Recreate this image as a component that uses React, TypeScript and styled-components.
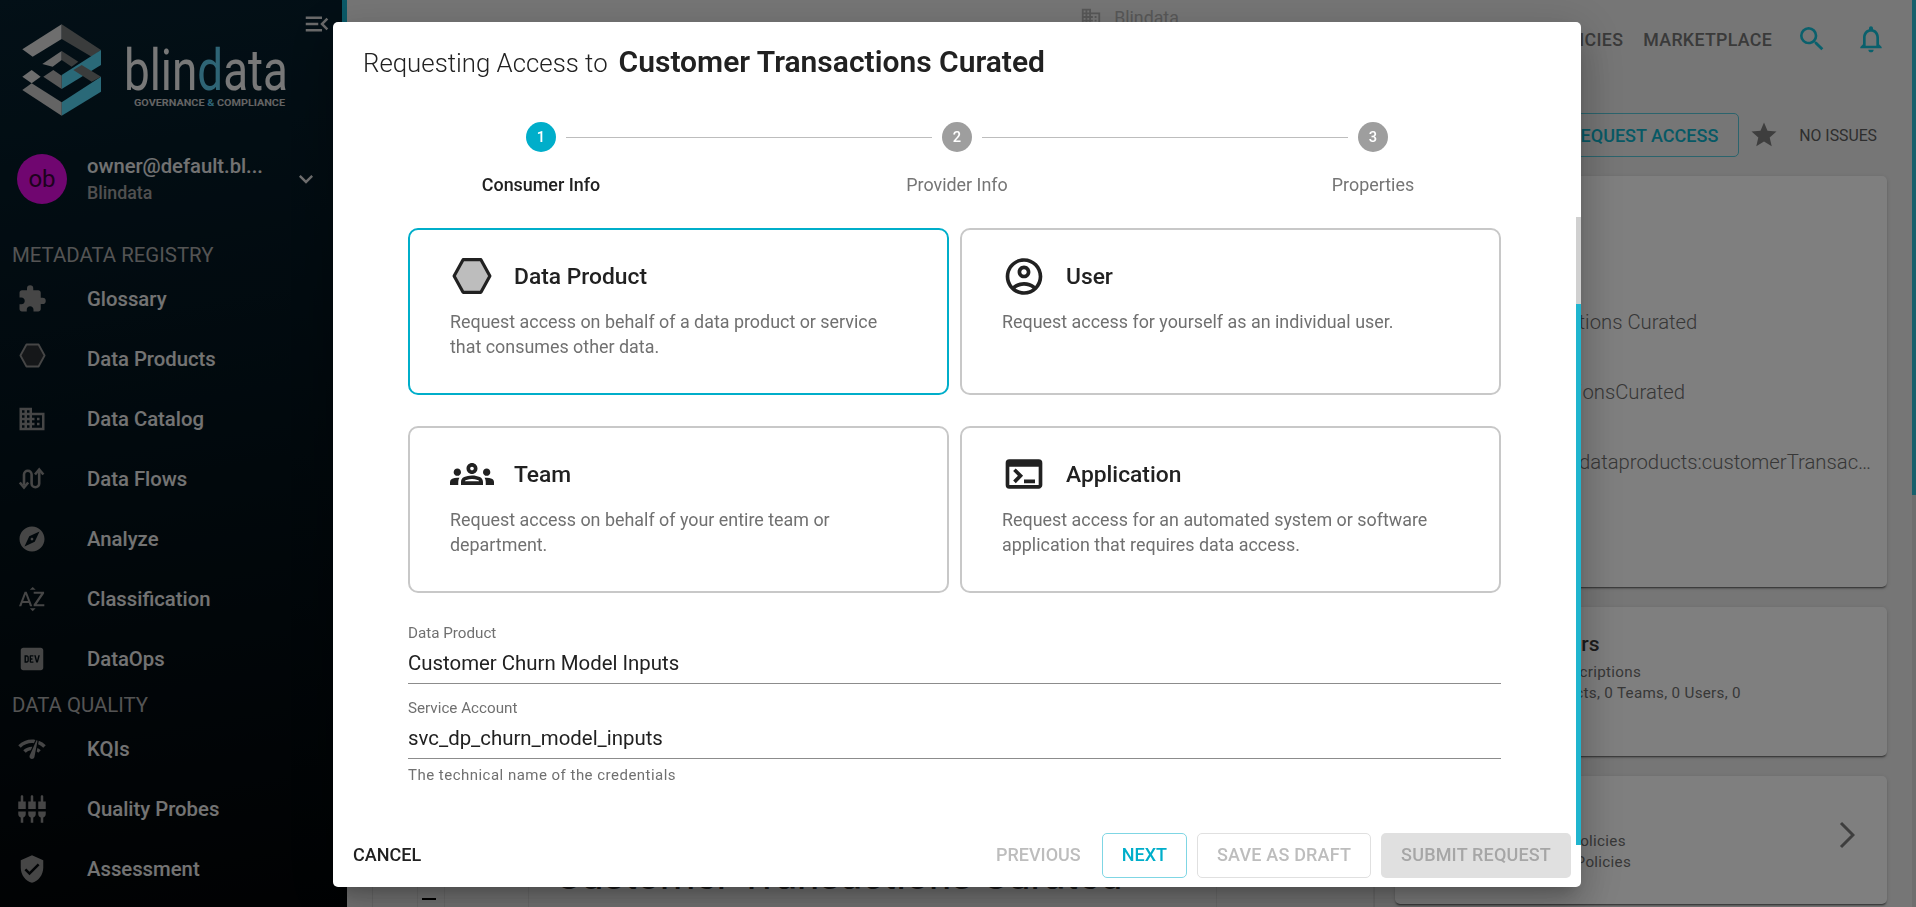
import styled, { createGlobalStyle } from "styled-components";
import { ReactNode } from "react";
import {
  MdBusiness,
  MdExplore,
  MdExtension,
  MdKeyboardArrowDown,
  MdLogoDev,
  MdMenuOpen,
  MdNetworkCheck,
  MdNotificationsNone,
  MdOutlineAccountCircle,
  MdOutlineGroups,
  MdOutlineTerminal,
  MdSearch,
  MdSettingsInputComponent,
  MdSortByAlpha,
  MdStar,
  MdVerifiedUser,
} from "react-icons/md";

const GlobalStyle = createGlobalStyle`
  html, body {
    margin: 0;
    height: 907px;
    overflow: hidden;
    font-family: Roboto, "Liberation Sans", sans-serif;
  }
  * { box-sizing: border-box; }
`;

const Shell = styled.div`
  display: flex;
  width: 1916px;
  height: 907px;
  overflow: hidden;
`;

/* sidebar */
const Sidebar = styled.aside`
  position: relative;
  flex: 0 0 347px;
  display: flex;
  flex-direction: column;
  background: linear-gradient(170deg, #06202e 0%, #03131c 45%, #020406 100%);
  color: #f2f2f2;
`;
const SideThumb = styled.div`
  position: absolute;
  top: 0;
  right: 0;
  width: 5px;
  height: 500px;
  background: #16b4d0;
`;
const Toggle = styled.div`
  position: absolute;
  top: 9px;
  right: 15px;
  display: flex;
  color: #d4d4d4;
`;
const LogoBox = styled.div`
  height: 149px;
`;
const LogoSvg = styled.svg`
  display: block;
`;
const Profile = styled.div`
  height: 60px;
  display: flex;
  align-items: center;
  padding-left: 17px;
`;
const Avatar = styled.div`
  width: 50px;
  height: 50px;
  border-radius: 50%;
  background: #e00ce0;
  color: #3c053c;
  font-size: 24px;
  display: flex;
  align-items: center;
  justify-content: center;
  margin-right: 20px;
`;
const ProfileText = styled.div`
  width: 176px;
`;
const ProfileName = styled.div`
  font-size: 20.2px;
  font-weight: 500;
  line-height: 28px;
  color: #e4e4e4;
  white-space: nowrap;
`;
const ProfileOrg = styled.div`
  font-size: 17.8px;
  font-weight: 500;
  line-height: 26px;
  color: #a0a0a0;
`;
const ProfileArrow = styled.div`
  margin-left: 29px;
  display: flex;
  color: #e0e0e0;
`;
const SectionTitle = styled.div`
  height: 30px;
  line-height: 32px;
  padding-left: 12px;
  font-size: 20.4px;
  color: #a8a8a8;
  margin-top: ${(p: { $first?: boolean }) => (p.$first ? "30px" : "0")};
`;
const NavItem = styled.div`
  height: 60px;
  display: flex;
  align-items: center;
  padding-left: 17px;
`;
const NavIcon = styled.div<{ $lift?: number }>`
  width: 30px;
  height: 30px;
  display: flex;
  align-items: center;
  justify-content: center;
  color: #8c8c8c;
  margin-right: 40px;
  padding-bottom: ${(p) => p.$lift ?? 0}px;
`;
const NavText = styled.div`
  font-size: 20.3px;
  font-weight: 500;
  color: #e6e6e6;
`;

/* page behind the dialog */
const Main = styled.main`
  flex: 1;
  display: flex;
  min-width: 0;
`;
const Page = styled.div`
  flex: 1;
  min-width: 0;
  background: #ececec;
  display: flex;
  flex-direction: column;
  padding: 0 25px;
  color: #747474;
`;
const Rail = styled.div`
  flex: 0 0 4px;
  display: flex;
  flex-direction: column;
  background: #dcdcdc;
`;
const RailThumb = styled.div`
  height: 495px;
  background: #2fc0d8;
`;
const TopBar = styled.div`
  height: 113px;
  display: grid;
  grid-template-columns: 1fr auto 1fr;
`;
const Crumb = styled.div`
  grid-column: 2;
  display: flex;
  align-items: center;
  gap: 12px;
  height: 34px;
  font-size: 17.8px;
  color: #b0b0b0;
`;
const TopNav = styled.nav`
  grid-column: 3;
  justify-self: end;
  display: flex;
  align-items: center;
  height: 78px;
  gap: 20px;
  font-size: 17.8px;
  font-weight: 500;
  letter-spacing: 0.3px;
`;
const TopIcon = styled.div`
  display: flex;
  color: #14c0d8;
  margin-left: ${(p: { $gap: number }) => p.$gap}px;
`;
const ActionRow = styled.div`
  display: flex;
  align-items: center;
  justify-content: flex-end;
  height: 44px;
  margin-right: 10px;
`;
const RequestButton = styled.div`
  height: 44px;
  padding: 0 20px;
  display: flex;
  align-items: center;
  border: 1px solid #56c8da;
  border-radius: 5px;
  font-size: 18px;
  font-weight: 500;
  color: #0fb2ca;
`;
const StarIcon = styled.div`
  display: flex;
  margin: 0 20px 0 10px;
  color: #7c7c7c;
`;
const IssueText = styled.div`
  font-size: 15.8px;
  color: #5c5c5c;
`;
const Columns = styled.div`
  display: flex;
  gap: 20px;
  margin-top: 19px;
  flex: 1;
  min-height: 0;
`;
const LeftPane = styled.div`
  flex: 1;
  min-width: 0;
`;
const LowerPanel = styled.div`
  margin-top: 640px;
  height: 120px;
  display: flex;
  border-left: 1px solid #d8d8d8;
  border-right: 1px solid #d8d8d8;
`;
const LowerCell = styled.div<{ $width?: number }>`
  flex: ${(p) => (p.$width ? `0 0 ${p.$width}px` : "1")};
  min-width: 0;
  border-right: 1px solid #dcdcdc;
`;
const Minus = styled.div`
  width: 14px;
  height: 2px;
  background: #000;
  margin: 82px 0 0 4px;
`;
const BigTitle = styled.div`
  padding: 35px 0 0 26px;
  font-size: 40.3px;
  line-height: 50px;
  color: #333;
  white-space: nowrap;
`;
const RightPane = styled.div`
  flex: 0 0 492px;
  min-width: 0;
  display: flex;
  flex-direction: column;
  gap: 20px;
`;
const InfoCard = styled.div<{ $height: number }>`
  height: ${(p) => p.$height}px;
  flex-shrink: 0;
  background: #fff;
  border-radius: 5px;
  box-shadow: 0 2px 2px -1px rgba(0, 0, 0, 0.6), 0 1px 4px rgba(0, 0, 0, 0.12);
`;
const DetailList = styled.div`
  padding: 111px 12px 0 20px;
`;
const DetailRow = styled.div`
  height: 70px;
  line-height: 70px;
  font-size: 20.3px;
  font-weight: 300;
  color: #6e6e6e;
  white-space: nowrap;
  overflow: hidden;
  text-overflow: ellipsis;
`;
const SummaryBody = styled.div`
  padding: 25px 0 0 89px;
  flex: 1;
  align-self: flex-start;
`;
const SummaryRow = styled.div`
  display: flex;
  align-items: center;
  height: 100%;
`;
const SummaryTitle = styled.div`
  font-size: 21px;
  font-weight: 500;
  line-height: 24px;
  color: #3a3a3a;
  margin: 0 0 6px 8px;
`;
const SummaryLine = styled.div`
  font-size: 15.2px;
  line-height: 20.5px;
  letter-spacing: 0.3px;
  color: #707070;
  max-width: 272px;
`;
const SummaryArrow = styled.svg`
  display: block;
  color: #7c7c7c;
  margin: -10px 32px 0 0;
`;

/* dialog */
const Backdrop = styled.div`
  position: fixed;
  inset: 0;
  background: rgba(0, 0, 0, 0.5);
  display: grid;
  place-items: center;
  padding: 2px 2px 0 0;
`;
const Dialog = styled.div`
  position: relative;
  width: 1248px;
  height: 865px;
  background: #fff;
  border-radius: 5px;
  display: flex;
  flex-direction: column;
  color: #212121;
  box-shadow: 0 11px 15px -7px rgba(0, 0, 0, 0.2), 0 24px 38px 3px rgba(0, 0, 0, 0.14), 0 9px 46px 8px rgba(0, 0, 0, 0.12);
`;
const ScrollRail = styled.div`
  position: absolute;
  top: 195px;
  right: 0;
  width: 5px;
  height: 628px;
  display: flex;
  flex-direction: column;
`;
const ScrollPart = styled.div<{ $active?: boolean }>`
  flex: ${(p) => (p.$active ? "1" : "0 0 87px")};
  background: ${(p) => (p.$active ? "#20b5cf" : "#d0d0d0")};
`;
const DialogHead = styled.div`
  height: 100px;
  padding: 23px 0 0 30px;
  display: flex;
  align-items: baseline;
  gap: 11px;
  line-height: 34px;
`;
const HeadLead = styled.span`
  font-size: 25.8px;
  font-weight: 300;
`;
const HeadName = styled.span`
  font-size: 30px;
  font-weight: 600;
`;
const StepRow = styled.div`
  display: flex;
  align-items: center;
  padding: 0 193px;
`;
const StepDot = styled.div<{ $active?: boolean }>`
  flex: 0 0 30px;
  height: 30px;
  border-radius: 50%;
  background: ${(p) => (p.$active ? "#00aeca" : "#9e9e9e")};
  color: #fff;
  font-size: 14.67px;
  font-weight: 500;
  display: flex;
  align-items: center;
  justify-content: center;
`;
const StepLine = styled.div`
  flex: 1;
  height: 1px;
  margin: 0 10px;
  background: #bdbdbd;
`;
const StepLabels = styled.div`
  display: grid;
  grid-template-columns: repeat(3, 1fr);
  margin-top: 23px;
`;
const StepLabel = styled.div<{ $active?: boolean }>`
  text-align: center;
  font-size: 17.9px;
  line-height: 20px;
  font-weight: ${(p) => (p.$active ? 500 : 400)};
  color: ${(p) => (p.$active ? "#212121" : "#757575")};
`;
const DialogBody = styled.div`
  flex: 1;
  padding: 33px 80px 0 75px;
`;
const ChoiceGrid = styled.div`
  display: grid;
  grid-template-columns: 1fr 1fr;
  grid-auto-rows: 167px;
  column-gap: 11px;
  row-gap: 31px;
`;
const Choice = styled.div<{ $active?: boolean }>`
  border: 2px solid ${(p) => (p.$active ? "#00aeca" : "#c8c8c8")};
  border-radius: 10px;
  padding: 27px 50px 0 40px;
`;
const ChoiceHead = styled.div`
  display: flex;
  align-items: center;
  height: 38px;
`;
const ChoiceIcon = styled.div`
  flex: 0 0 44px;
  min-width: 0;
  display: flex;
  justify-content: center;
  margin-right: 20px;
  color: #212121;
`;
const ChoiceTitle = styled.div`
  font-size: 22.8px;
  font-weight: 500;
  color: #212121;
`;
const ChoiceText = styled.div`
  margin-top: 14px;
  font-size: 17.9px;
  line-height: 25px;
  color: #707070;
`;
const Field = styled.div<{ $gap: number }>`
  margin-top: ${(p) => p.$gap}px;
`;
const FieldLabel = styled.div`
  font-size: 15.2px;
  line-height: 18px;
  color: #707070;
`;
const FieldValue = styled.div`
  margin-top: 9px;
  padding-bottom: 8px;
  font-size: 20.4px;
  line-height: 24px;
  color: #212121;
  border-bottom: 1px solid #8c8c8c;
`;
const FieldHelp = styled.div`
  margin-top: 7px;
  font-size: 15px;
  line-height: 18px;
  letter-spacing: 0.48px;
  color: #707070;
`;
const DialogFoot = styled.div`
  display: flex;
  align-items: center;
  gap: 10px;
  padding: 0 10px 9px 0;
`;
const TextButton = styled.div<{ $muted?: boolean; $push?: boolean }>`
  height: 45px;
  padding: ${(p) => (p.$muted ? "0 11px 2px 20px" : "0 20px 2px")};
  display: flex;
  align-items: center;
  font-size: 18px;
  font-weight: 500;
  color: ${(p) => (p.$muted ? "#bdbdbd" : "#212121")};
  margin-right: ${(p) => (p.$push ? "auto" : "0")};
`;
const OutlineButton = styled.div<{ $active?: boolean }>`
  height: 45px;
  padding: 0 19px 2px;
  display: flex;
  align-items: center;
  font-size: 18px;
  font-weight: 500;
  letter-spacing: ${(p) => (p.$active ? "0" : "0.18px")};
  border-radius: 5px;
  border: 1px solid ${(p) => (p.$active ? "#7fd6e4" : "#e0e0e0")};
  color: ${(p) => (p.$active ? "#00aeca" : "#bdbdbd")};
`;
const SolidButton = styled.div`
  height: 45px;
  padding: 0 20px 2px;
  display: flex;
  align-items: center;
  font-size: 18px;
  font-weight: 500;
  letter-spacing: 0.18px;
  border-radius: 5px;
  background: #e0e0e0;
  color: #a6a6a6;
`;

function Hexagon({ size, fill, stroke, width }: { size: number; fill: string; stroke: string; width: number }) {
  return (
    <svg width={size} height={size} viewBox="0 0 38 38">
      <polygon points="2,19 10.5,3.5 27.5,3.5 36,19 27.5,34.5 10.5,34.5" fill={fill} stroke={stroke} strokeWidth={width} strokeLinejoin="round" />
    </svg>
  );
}

function FlowIcon() {
  return (
    <svg width="30" height="30" viewBox="0 0 30 30" fill="none" stroke="currentColor" strokeWidth="2.6">
      <path d="M7 21V10.5a3.8 3.8 0 0 1 7.6 0v9a3.8 3.8 0 0 0 7.6 0V7" />
      <path d="M2.8 18.5 7 23.5l4.2-5" />
      <path d="M18 10.5l4.2-5 4.2 5" />
    </svg>
  );
}

function Logo() {
  return (
    <LogoSvg width="347" height="149" viewBox="0 0 347 149">
      <g transform="translate(10 15) scale(0.3333)">
        <polygon points="37,103 155,28 155,72 68,125" fill="#dcdcdc" />
        <polygon points="155,28 273,105 245,125 155,72" fill="#747878" />
        <polygon points="273,105 273,150 155,222 155,180" fill="#54d2f0" />
        <polygon points="97,147 155,108 155,135 128,155" fill="#d0d0d0" />
        <polygon points="155,108 205,140 185,155 155,135" fill="#747878" />
        <polygon points="37,185 65,165 92,185 65,205" fill="#dcdcdc" />
        <polygon points="100,185 130,165 155,182 155,222" fill="#b0b0b0" />
        <polygon points="190,165 215,150 273,185 245,200" fill="#747878" />
        <polygon points="273,185 273,230 155,302 155,262" fill="#54d2f0" />
        <polygon points="37,225 65,205 155,262 155,302" fill="#c8c8c8" />
      </g>
      <text x="124" y="90" fontFamily="Roboto" fontSize="58" fontWeight="400" textLength="164" lengthAdjust="spacingAndGlyphs" fill="#f0f0f0">
        blin<tspan fill="#5cc8ea">d</tspan>ata
      </text>
      <text x="134" y="106" fontFamily="Roboto" fontSize="9.5" fontWeight="700" textLength="151" lengthAdjust="spacingAndGlyphs" fill="#c8c8c8">
        GOVERNANCE <tspan fill="#5cc8ea">&amp;</tspan> COMPLIANCE
      </text>
    </LogoSvg>
  );
}

const registryItems: { icon: ReactNode; label: string; lift?: number }[] = [
  { icon: <MdExtension size={30} />, label: "Glossary" },
  { icon: <Hexagon size={27} fill="#2a2f33" stroke="#8c8c8c" width={2.6} />, label: "Data Products", lift: 8 },
  { icon: <MdBusiness size={30} />, label: "Data Catalog" },
  { icon: <FlowIcon />, label: "Data Flows" },
  { icon: <MdExplore size={30} />, label: "Analyze" },
  { icon: <MdSortByAlpha size={30} />, label: "Classification" },
  { icon: <MdLogoDev size={30} />, label: "DataOps" },
];

const qualityItems: { icon: ReactNode; label: string; lift?: number }[] = [
  { icon: <MdNetworkCheck size={30} />, label: "KQIs" },
  { icon: <MdSettingsInputComponent size={30} />, label: "Quality Probes" },
  { icon: <MdVerifiedUser size={30} />, label: "Assessment" },
];

const choices: { icon: ReactNode; title: string; text: string; active?: boolean }[] = [
  {
    icon: <Hexagon size={40} fill="#bdbdbd" stroke="#212121" width={3} />,
    title: "Data Product",
    text: "Request access on behalf of a data product or service that consumes other data.",
    active: true,
  },
  {
    icon: <MdOutlineAccountCircle size={47} />,
    title: "User",
    text: "Request access for yourself as an individual user.",
  },
  {
    icon: <MdOutlineGroups size={44} />,
    title: "Team",
    text: "Request access on behalf of your entire team or department.",
  },
  {
    icon: <MdOutlineTerminal size={46} />,
    title: "Application",
    text: "Request access for an automated system or software application that requires data access.",
  },
];

export default function App() {
  return (
    <Shell>
      <GlobalStyle />
      <Sidebar>
        <SideThumb />
        <Toggle>
          <MdMenuOpen size={30} />
        </Toggle>
        <LogoBox>
          <Logo />
        </LogoBox>
        <Profile>
          <Avatar>ob</Avatar>
          <ProfileText>
            <ProfileName>owner@default.bl...</ProfileName>
            <ProfileOrg>Blindata</ProfileOrg>
          </ProfileText>
          <ProfileArrow>
            <MdKeyboardArrowDown size={28} />
          </ProfileArrow>
        </Profile>
        <SectionTitle $first>METADATA REGISTRY</SectionTitle>
        {registryItems.map((item) => (
          <NavItem key={item.label}>
            <NavIcon $lift={item.lift}>{item.icon}</NavIcon>
            <NavText>{item.label}</NavText>
          </NavItem>
        ))}
        <SectionTitle>DATA QUALITY</SectionTitle>
        {qualityItems.map((item) => (
          <NavItem key={item.label}>
            <NavIcon $lift={item.lift}>{item.icon}</NavIcon>
            <NavText>{item.label}</NavText>
          </NavItem>
        ))}
      </Sidebar>

      <Main>
        <Page>
          <TopBar>
            <Crumb>
              <MdBusiness size={22} />
              Blindata
            </Crumb>
            <TopNav>
              <span>POLICIES</span>
              <span>MARKETPLACE</span>
              <TopIcon $gap={4}>
                <MdSearch size={32} />
              </TopIcon>
              <TopIcon $gap={7}>
                <MdNotificationsNone size={32} />
              </TopIcon>
            </TopNav>
          </TopBar>
          <ActionRow>
            <RequestButton>REQUEST ACCESS</RequestButton>
            <StarIcon>
              <MdStar size={30} />
            </StarIcon>
            <IssueText>NO ISSUES</IssueText>
          </ActionRow>
          <Columns>
            <LeftPane>
              <LowerPanel>
                <LowerCell $width={45} />
                <LowerCell $width={27}>
                  <Minus />
                </LowerCell>
                <LowerCell $width={84} />
                <LowerCell>
                  <BigTitle>Customer Transactions Curated</BigTitle>
                </LowerCell>
                <LowerCell $width={157} />
              </LowerPanel>
            </LeftPane>
            <RightPane>
              <InfoCard $height={411}>
                <DetailList>
                  <DetailRow>Customer Transactions Curated</DetailRow>
                  <DetailRow>customerTransactionsCurated</DetailRow>
                  <DetailRow>urn:blindata:demo:dataproducts:customerTransactionsCurated</DetailRow>
                </DetailList>
              </InfoCard>
              <InfoCard $height={149}>
                <SummaryBody>
                  <SummaryTitle>Consumers</SummaryTitle>
                  <SummaryLine>0 Active Subscriptions</SummaryLine>
                  <SummaryLine>0 Data Products, 0 Teams, 0 Users, 0 Applications</SummaryLine>
                </SummaryBody>
              </InfoCard>
              <InfoCard $height={128}>
                <SummaryRow>
                  <SummaryBody>
                    <SummaryTitle>Policies</SummaryTitle>
                    <SummaryLine>0 Published Policies</SummaryLine>
                    <SummaryLine>0 Suggested Policies</SummaryLine>
                  </SummaryBody>
                  <SummaryArrow width="16" height="28" viewBox="0 0 16 28" fill="none" stroke="currentColor" strokeWidth="3">
                    <polyline points="2,2 14,14 2,26" />
                  </SummaryArrow>
                </SummaryRow>
              </InfoCard>
            </RightPane>
          </Columns>
        </Page>
        <Rail>
          <RailThumb />
        </Rail>
      </Main>

      <Backdrop>
        <Dialog>
          <ScrollRail>
            <ScrollPart />
            <ScrollPart $active />
          </ScrollRail>
          <DialogHead>
            <HeadLead>Requesting Access to</HeadLead>
            <HeadName>Customer Transactions Curated</HeadName>
          </DialogHead>
          <StepRow>
            <StepDot $active>1</StepDot>
            <StepLine />
            <StepDot>2</StepDot>
            <StepLine />
            <StepDot>3</StepDot>
          </StepRow>
          <StepLabels>
            <StepLabel $active>Consumer Info</StepLabel>
            <StepLabel>Provider Info</StepLabel>
            <StepLabel>Properties</StepLabel>
          </StepLabels>
          <DialogBody>
            <ChoiceGrid>
              {choices.map((c) => (
                <Choice key={c.title} $active={c.active}>
                  <ChoiceHead>
                    <ChoiceIcon>{c.icon}</ChoiceIcon>
                    <ChoiceTitle>{c.title}</ChoiceTitle>
                  </ChoiceHead>
                  <ChoiceText>{c.text}</ChoiceText>
                </Choice>
              ))}
            </ChoiceGrid>
            <Field $gap={31}>
              <FieldLabel>Data Product</FieldLabel>
              <FieldValue>Customer Churn Model Inputs</FieldValue>
            </Field>
            <Field $gap={15}>
              <FieldLabel>Service Account</FieldLabel>
              <FieldValue>svc_dp_churn_model_inputs</FieldValue>
              <FieldHelp>The technical name of the credentials</FieldHelp>
            </Field>
          </DialogBody>
          <DialogFoot>
            <TextButton $push>CANCEL</TextButton>
            <TextButton $muted>PREVIOUS</TextButton>
            <OutlineButton $active>NEXT</OutlineButton>
            <OutlineButton>SAVE AS DRAFT</OutlineButton>
            <SolidButton>SUBMIT REQUEST</SolidButton>
          </DialogFoot>
        </Dialog>
      </Backdrop>
    </Shell>
  );
}
